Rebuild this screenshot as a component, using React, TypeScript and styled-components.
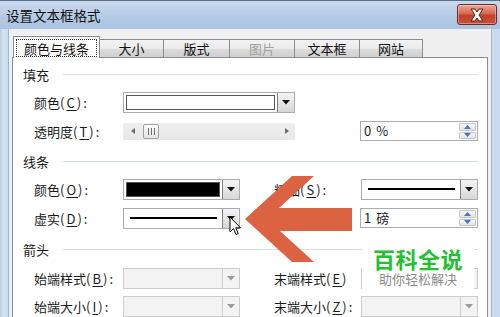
import React from "react";
import styled, { createGlobalStyle } from "styled-components";

const FONT = `"Noto Sans CJK SC", "Noto Sans", sans-serif`;
const PANEL_BORDER = "#898c95";

const GlobalStyle = createGlobalStyle`
  html, body {
    margin: 0;
    padding: 0;
    background: #c8d9ee;
  }
  body {
    font-family: ${FONT};
    font-size: 13px;
    color: #1a1a1a;
  }
`;

const Window = styled.div`
  position: relative;
  width: 500px;
  height: 317px;
  overflow: hidden;
  display: flex;
  flex-direction: column;
  background: linear-gradient(90deg, #b7cbe4 0px, #d4e2f2 3px, #c9dbef 8px);
`;

const TitleBar = styled.div`
  height: 29px;
  flex: none;
  display: flex;
  align-items: flex-start;
  justify-content: space-between;
  border-top: 1px solid #5b6d84;
  box-sizing: border-box;
  background: linear-gradient(#c9d9ed, #b3cae5 60%, #aac3e1);
`;

const Title = styled.div`
  padding: 5px 0 0 6px;
  font-size: 13.5px;
  line-height: 18px;
  color: #111;
`;

const CloseButton = styled.div`
  width: 40px;
  height: 21px;
  margin: 3px 3px 0 0;
  box-sizing: border-box;
  border: 1px solid #6e2a22;
  border-radius: 3px;
  background: linear-gradient(#e9a796, #d7684e 45%, #c2412a 55%, #c8523a);
  display: flex;
  align-items: center;
  justify-content: center;
  box-shadow: inset 0 0 0 1px rgba(255, 255, 255, 0.35);
`;

const Client = styled.div`
  flex: 1;
  margin: 0 8px;
  padding: 7px 3px 0;
  display: flex;
  flex-direction: column;
  background: #f0f0f0;
  border-left: 1px solid #a3b5cb;
  border-right: 1px solid #a3b5cb;
  box-sizing: border-box;
`;

const TabStrip = styled.div`
  height: 22px;
  display: flex;
  align-items: flex-end;
  padding-left: 1px;
  position: relative;
  z-index: 1;
  margin-bottom: -1px;
`;

const Tab = styled.div<{ $w: number; $active?: boolean; $disabled?: boolean }>`
  width: ${({ $w }) => $w}px;
  height: ${({ $active }) => ($active ? 22 : 19)}px;
  margin-left: -1px;
  box-sizing: border-box;
  border: 1px solid ${PANEL_BORDER};
  border-bottom: ${({ $active }) => ($active ? "none" : `1px solid ${PANEL_BORDER}`)};
  background: ${({ $active }) =>
    $active ? "#fff" : "linear-gradient(#f3f3f3, #ebebeb 50%, #dddddd 51%, #cfcfcf)"};
  color: ${({ $disabled }) => ($disabled ? "#a0a0a0" : "#111")};
  display: flex;
  align-items: center;
  justify-content: center;
  padding: ${({ $active }) => ($active ? "2px 2px 1px" : "0")};
  &:first-child {
    margin-left: 0;
  }
`;

const FocusRect = styled.div`
  flex: 1;
  align-self: stretch;
  display: flex;
  align-items: center;
  justify-content: center;
  border: 1px dotted #333;
`;

const Panel = styled.div`
  flex: 1;
  background: #fff;
  border: 1px solid ${PANEL_BORDER};
  border-bottom: none;
  padding: 2px 9px 0 10px;
  display: flex;
  flex-direction: column;
`;

const SectionHeader = styled.div<{ $h: number }>`
  height: ${({ $h }) => $h}px;
  flex: none;
  display: flex;
  align-items: center;
`;

const Rule = styled.div`
  flex: 1;
  height: 1px;
  margin-left: 14px;
  background: #d7e0e8;
`;

const Row = styled.div<{ $h: number }>`
  height: ${({ $h }) => $h}px;
  flex: none;
  display: flex;
  align-items: center;
  padding-left: 11px;
`;

const Label = styled.div<{ $w: number }>`
  width: ${({ $w }) => $w}px;
  flex: none;
  white-space: nowrap;
`;

const Key = styled.span`
  letter-spacing: 2px;
  u {
    text-underline-offset: 2px;
  }
`;

const RightGroup = styled.div`
  margin-left: auto;
  display: flex;
  align-items: center;
`;

const Combo = styled.div<{ $w: number; $disabled?: boolean }>`
  width: ${({ $w }) => $w}px;
  height: 21px;
  flex: none;
  box-sizing: border-box;
  display: flex;
  border: 1px solid ${({ $disabled }) => ($disabled ? "#cdcdcd" : "#a9acb2")};
  background: ${({ $disabled }) => ($disabled ? "#f3f3f3" : "#fff")};
`;

const Field = styled.div`
  flex: 1;
  padding: 2px;
  display: flex;
`;

const Swatch = styled.div<{ $color: string }>`
  flex: 1;
  border: 1px solid #555;
  background: ${({ $color }) => $color};
`;

const LineSample = styled.div`
  flex: 1;
  display: flex;
  align-items: center;
  padding: 0 5px 0 6px;
  &::after {
    content: "";
    flex: 1;
    height: 2px;
    background: #000;
  }
`;

const DropButton = styled.div<{ $disabled?: boolean }>`
  width: 17px;
  flex: none;
  box-sizing: border-box;
  border-left: 1px solid ${({ $disabled }) => ($disabled ? "#cdcdcd" : "#7d7f84")};
  background: ${({ $disabled }) =>
    $disabled ? "#f3f3f3" : "linear-gradient(#f4f4f4, #e6e6e6 50%, #d6d6d6)"};
  display: flex;
  align-items: center;
  justify-content: center;
`;

const Spinner = styled.div`
  width: 118px;
  height: 20px;
  box-sizing: border-box;
  border: 1px solid #abadb3;
  background: #fff;
  display: flex;
`;

const SpinText = styled.div`
  flex: 1;
  padding-left: 3px;
  line-height: 18px;
  letter-spacing: 1px;
`;

const SpinButtons = styled.div`
  width: 17px;
  display: flex;
  flex-direction: column;
  padding: 1px 1px 1px 0;
  gap: 1px;
`;

const SpinHalf = styled.div`
  flex: 1;
  border: 1px solid #c3c7cd;
  border-radius: 1px;
  background: linear-gradient(#f6f6f6, #e4e4e4);
  display: flex;
  align-items: center;
  justify-content: center;
`;

const Slider = styled.div`
  width: 172px;
  height: 17px;
  flex: none;
  box-sizing: border-box;
  background: linear-gradient(#efefef, #e8e8e8);
  display: flex;
  align-items: center;
  padding: 0 6px 0 8px;
`;

const Thumb = styled.div`
  width: 16px;
  height: 15px;
  margin-left: 8px;
  box-sizing: border-box;
  border: 1px solid #a3a3a3;
  border-radius: 2px;
  background: linear-gradient(#fbfbfb, #e3e3e3);
  display: flex;
  align-items: center;
  justify-content: center;
  gap: 2px;
  & > i {
    width: 1px;
    height: 7px;
    background: #6e6e6e;
  }
`;

const SliderFill = styled.div`
  flex: 1;
`;

const Overlay = styled.svg`
  position: absolute;
  left: 240px;
  top: 170px;
`;

const Cursor = styled.svg`
  position: absolute;
  left: 229px;
  top: 216px;
`;

const Watermark = styled.div`
  position: absolute;
  left: 362px;
  top: 245px;
  width: 112px;
  height: 45px;
  background: #fff;
  display: flex;
  flex-direction: column;
  align-items: center;
`;

const BrandName = styled.div`
  font-size: 22px;
  font-weight: 700;
  line-height: 26px;
  color: #21c12f;
  letter-spacing: 0.5px;
`;

const BrandSlogan = styled.div`
  font-size: 13px;
  line-height: 16px;
  color: #8b8b8b;
`;

const DownTriangle = ({ color = "#111" }: { color?: string }) => (
  <svg width="8" height="5" viewBox="0 0 8 5">
    <path d="M0 0 H8 L4 4.5 Z" fill={color} />
  </svg>
);

const SpinArrow = ({ up }: { up?: boolean }) => (
  <svg width="7" height="4" viewBox="0 0 7 4">
    <path d={up ? "M0 4 H7 L3.5 0 Z" : "M0 0 H7 L3.5 4 Z"} fill="#4e72b9" />
  </svg>
);

const ColorCombo = ({ w, color }: { w: number; color: string }) => (
  <Combo $w={w}>
    <Field>
      <Swatch $color={color} />
    </Field>
    <DropButton>
      <DownTriangle />
    </DropButton>
  </Combo>
);

const LineCombo = () => (
  <Combo $w={117}>
    <LineSample />
    <DropButton>
      <DownTriangle />
    </DropButton>
  </Combo>
);

const DisabledCombo = () => (
  <Combo $w={117} $disabled>
    <Field />
    <DropButton $disabled>
      <DownTriangle color="#9c9c9c" />
    </DropButton>
  </Combo>
);

const SpinBox = ({ value }: { value: string }) => (
  <Spinner>
    <SpinText>{value}</SpinText>
    <SpinButtons>
      <SpinHalf>
        <SpinArrow up />
      </SpinHalf>
      <SpinHalf>
        <SpinArrow />
      </SpinHalf>
    </SpinButtons>
  </Spinner>
);

const FieldLabel = ({ text, k, w = 89, colon = true }: { text: string; k: string; w?: number; colon?: boolean }) => (
  <Label $w={w}>
    {text}
    <Key>
      (<u>{k}</u>){colon ? ":" : ""}
    </Key>
  </Label>
);

const tabs = [
  { label: "颜色与线条", w: 87, active: true },
  { label: "大小", w: 65 },
  { label: "版式", w: 67 },
  { label: "图片", w: 66, disabled: true },
  { label: "文本框", w: 66 },
  { label: "网站", w: 64 },
];

const App: React.FC = () => {
  return (
    <>
      <GlobalStyle />
      <Window>
        <TitleBar>
          <Title>设置文本框格式</Title>
          <CloseButton>
            <svg width="16" height="14" viewBox="0 0 16 14">
              <path
                d="M2 1 H6 L8 4 L10 1 H14 L10 7 L14 13 H10 L8 10 L6 13 H2 L6 7 Z"
                fill="#fff"
                stroke="#5a1d14"
                strokeWidth="1"
                strokeLinejoin="round"
              />
            </svg>
          </CloseButton>
        </TitleBar>
        <Client>
          <TabStrip>
            {tabs.map((t) => (
              <Tab key={t.label} $w={t.w} $active={t.active} $disabled={t.disabled}>
                {t.active ? <FocusRect>{t.label}</FocusRect> : t.label}
              </Tab>
            ))}
          </TabStrip>
          <Panel>
            <SectionHeader $h={28}>
              填充
              <Rule />
            </SectionHeader>
            <Row $h={28}>
              <FieldLabel text="颜色" k="C" />
              <ColorCombo w={172} color="#fff" />
            </Row>
            <Row $h={30}>
              <FieldLabel text="透明度" k="T" />
              <Slider>
                <svg width="4" height="6" viewBox="0 0 4 6">
                  <path d="M4 0 V6 L0 3 Z" fill="#6a6a6a" />
                </svg>
                <Thumb>
                  <i />
                  <i />
                  <i />
                </Thumb>
                <SliderFill />
                <svg width="4" height="6" viewBox="0 0 4 6">
                  <path d="M0 0 V6 L4 3 Z" fill="#6a6a6a" />
                </svg>
              </Slider>
              <RightGroup>
                <SpinBox value="0 %" />
              </RightGroup>
            </Row>
            <SectionHeader $h={30}>
              线条
              <Rule />
            </SectionHeader>
            <Row $h={26}>
              <FieldLabel text="颜色" k="O" />
              <ColorCombo w={117} color="#000" />
              <RightGroup>
                <FieldLabel text="粗细" k="S" w={87} />
                <LineCombo />
              </RightGroup>
            </Row>
            <Row $h={32}>
              <FieldLabel text="虚实" k="D" />
              <LineCombo />
              <RightGroup>
                <SpinBox value="1 磅" />
              </RightGroup>
            </Row>
            <SectionHeader $h={30}>
              箭头
              <Rule />
            </SectionHeader>
            <Row $h={28}>
              <FieldLabel text="始端样式" k="B" />
              <DisabledCombo />
              <RightGroup>
                <FieldLabel text="末端样式" k="E" w={87} colon={false} />
                <DisabledCombo />
              </RightGroup>
            </Row>
            <Row $h={28}>
              <FieldLabel text="始端大小" k="I" />
              <DisabledCombo />
              <RightGroup>
                <FieldLabel text="末端大小" k="Z" w={87} />
                <DisabledCombo />
              </RightGroup>
            </Row>
          </Panel>
        </Client>

        <Overlay width="120" height="100" viewBox="0 0 120 100">
          <path d="M5 49 L52 6 H74 L39 38 H112 V61 H40 L74 92 H52 Z" fill="#dc6342" />
        </Overlay>

        <Cursor width="13" height="21" viewBox="0 0 13 21">
          <path
            d="M1 1 V16 L4.5 12.5 L7 18.5 L9.2 17.6 L6.8 11.8 H11.5 Z"
            fill="#fff"
            stroke="#000"
            strokeWidth="1"
            strokeLinejoin="round"
          />
        </Cursor>

        <Watermark>
          <BrandName>百科全说</BrandName>
          <BrandSlogan>助你轻松解决</BrandSlogan>
        </Watermark>
      </Window>
    </>
  );
};

export default App;
